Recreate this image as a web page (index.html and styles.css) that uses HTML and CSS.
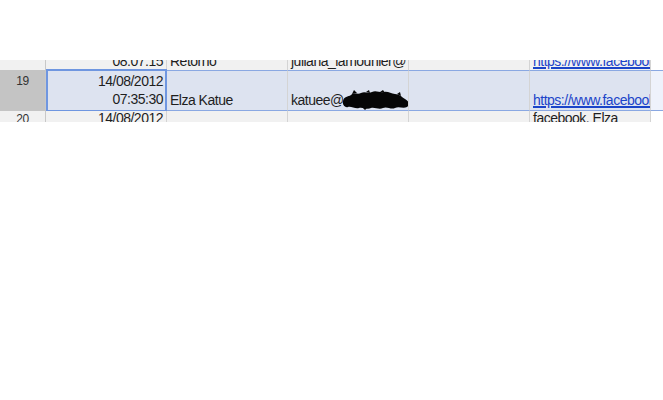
FILE: index.html
```html
<!DOCTYPE html>
<html lang="en">
<head>
    <meta charset="UTF-8">
    <title>Sheet</title>
    <link rel="stylesheet" href="styles.css">
</head>
<body>
    <div class="sheet">
        <div class="row row-prev">
            <div class="cell head">18</div>
            <div class="cell num">08:07:15</div>
            <div class="cell">Retorno</div>
            <div class="cell">juliana_lamounier@</div>
            <div class="cell"></div>
            <div class="cell"><a href="#">https://www.facebook.com/juliana</a></div>
            <div class="cell fill"></div>
        </div>
        <div class="row row-sel">
            <div class="cell head">19</div>
            <div class="cell num active">14/08/2012<br>07:35:30</div>
            <div class="cell">Elza Katue</div>
            <div class="cell">katuee@<svg class="blot" width="68" height="20" viewBox="0 0 68 20">
                <path d="M1 11 C2 6 6 7 9 5 C12 2 16 5 19 3 C23 1 26 4 30 2 C34 0 38 3 42 2 C46 1 49 4 53 4 C57 4 60 7 63 9 C67 11 68 15 65 17 C61 19 57 16 53 18 C49 20 45 16 41 18 C37 20 33 17 29 18 C25 20 21 17 17 18 C13 19 9 16 6 17 C3 18 0 15 1 11 Z" fill="#060606"/>
                <path d="M10 4 L12 0 L15 3 Z M24 2 L27 0 L28 3 Z M38 2 L41 0 L43 3 Z M55 4 L58 2 L59 6 Z M20 17 L23 20 L26 17 Z" fill="#060606"/>
            </svg></div>
            <div class="cell"></div>
            <div class="cell"><a href="#">https://www.facebook.com/elza</a></div>
            <div class="cell fill"></div>
        </div>
        <div class="row row-next">
            <div class="cell head">20</div>
            <div class="cell num">14/08/2012</div>
            <div class="cell"></div>
            <div class="cell"></div>
            <div class="cell"></div>
            <div class="cell">facebook. Elza</div>
            <div class="cell fill"></div>
        </div>
    </div>
</body>
</html>
```

FILE: styles.css
```css
body {
    margin: 0;
    background: #ffffff;
    font-family: "Liberation Sans", Arial, sans-serif;
    color: #1e1e1e;
}
.sheet {
    margin-top: 60px;
    width: 663px;
}
.row {
    display: flex;
}
.cell {
    box-sizing: border-box;
    width: 121px;
    flex: none;
    border-right: 1px solid #d4d4d4;
    background: #f1f1f1;
    font-size: 14px;
    letter-spacing: -0.5px;
    line-height: 18px;
    padding: 0 3px;
    white-space: nowrap;
    overflow: hidden;
    display: flex;
    align-items: flex-end;
}
.cell.head {
    width: 46px;
    justify-content: center;
    align-items: flex-start;
    font-size: 12px;
    letter-spacing: -0.3px;
    color: #333;
    border-right-color: #c8c8c8;
}
.cell.num {
    justify-content: flex-end;
    text-align: right;
}
.cell.fill {
    width: 12px;
    background: #ffffff;
    border-right: none;
}
.cell a {
    color: #1b44c9;
    text-decoration: underline;
    text-decoration-thickness: 2px;
    text-underline-offset: 1px;
}
.row-prev .cell {
    height: 10px;
}
.row-prev .cell.head {
    align-items: flex-end;
    color: transparent;
}
.row-sel .cell {
    height: 41px;
    padding-bottom: 1px;
    background: #dde3f0;
    border-top: 1px solid #8aa8e2;
    border-bottom: 1px solid #8aa8e2;
}
.row-sel .cell.head {
    background: #c4c4c4;
    border-top-color: #c4c4c4;
    border-bottom-color: #c4c4c4;
    padding-top: 4px;
    line-height: 12px;
}
.row-sel .cell.fill {
    background: #eef2fb;
}
.row-sel .cell.active {
    border: 2px solid #6f96e0;
    margin: -1px 0;
    height: 43px;
    padding-bottom: 2px;
    padding-right: 2px;
}
.row-next .cell {
    height: 11px;
    line-height: 14px;
    align-items: flex-start;
}
.row-next .cell.head {
    line-height: 12px;
    padding-top: 2px;
}
.blot {
    margin-left: -2px;
    margin-bottom: -1px;
    flex: none;
}
```
